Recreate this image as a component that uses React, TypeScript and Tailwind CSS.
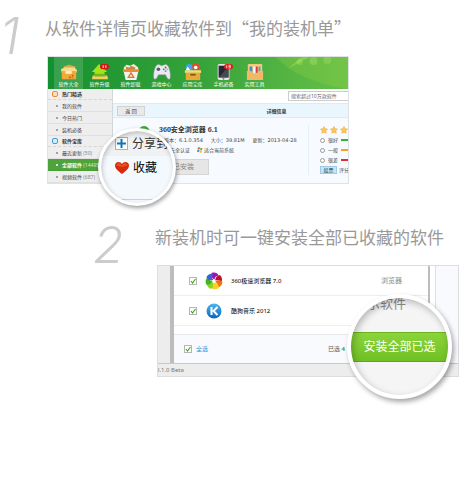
import React from "react";

type IconProps = { className?: string };

const BoxIcon = () => (
  <svg viewBox="0 0 20 20" className="size-[18px]">
    <path d="M4 4 10 2l7 2v5H4z" fill="#d9a94c" />
    <path d="M1 7 5 5h11l3 3-1 3H2z" fill="#f7dc8c" />
    <rect x="2" y="9" width="16" height="9" rx="1" fill="#f2a93b" />
    <path d="M6 9h7v3H6z" fill="#fff1bd" />
    <path d="M13 13h2v2h-2zm0 3h2v1h-2zm-3-1h2v2h-2z" fill="#b56617" />
  </svg>
);

const UpgradeIcon = () => (
  <svg viewBox="0 0 20 20" className="size-[18px]">
    <path d="M9 1 1 10h3v4h11v-4h3z" fill="#a5e319" />
    <path d="M2 14h16l1 4H1z" fill="#f4ce63" />
    <path d="M4 12h12v3H4z" fill="#6fb81b" />
    <rect x="10" y="1" width="10" height="6" rx="3" fill="#d91212" />
    <path d="M13.500 2.500v3M16.500 2.500v3" stroke="#fff" />
  </svg>
);

const RecycleIcon = () => (
  <svg viewBox="0 0 20 20" className="size-[18px]">
    <path d="M2 5 5 2l4 1 4-2 5 4v3H2z" fill="#f6eee0" />
    <path d="m4 4 4 1 2-2 5 2-1 3H5z" fill="#c88752" />
    <path d="M1 7h18v3H1z" fill="#f08b2e" />
    <path d="M2 10h16l-2 9H4z" fill="#f2f2ee" />
    <path d="m10 11 3 5H7z" fill="none" stroke="#e0782a" strokeWidth="1.500" />
  </svg>
);

const GamepadIcon = () => (
  <svg viewBox="0 0 20 20" className="size-[18px]">
    <path d="M5 2c2-1 3 1 5 1s3-2 5-1c3 1 5 10 4 15-1 2-3 1-5-4H6c-2 5-4 6-5 4C0 12 2 3 5 2z" fill="#e9e9f1" stroke="#9a9cab" strokeWidth=".6" />
    <circle cx="6" cy="7" r="2" fill="#555a68" />
    <circle cx="14" cy="5" r="1" fill="#d33" />
    <circle cx="12" cy="7" r="1" fill="#3972c5" />
    <circle cx="16" cy="7" r="1" fill="#e2b31d" />
    <circle cx="14" cy="9" r="1" fill="#47a33a" />
  </svg>
);

const TreasureIcon = () => (
  <svg viewBox="0 0 20 20" className="size-[18px]">
    <circle cx="6" cy="5" r="4" fill="#3fa7e8" />
    <circle cx="13" cy="4" r="4" fill="#e94a2d" />
    <circle cx="13" cy="5" r="2" fill="#fff" />
    <path d="m4 4 3 4H2z" fill="#fff" />
    <path d="M1 8h18v3H1z" fill="#f8d975" />
    <path d="M2 11h16v8H2z" fill="#e8a936" />
    <path d="M7 12h6v2H7z" fill="#8a5415" />
  </svg>
);

const PhoneIcon = () => (
  <svg viewBox="0 0 20 20" className="size-[18px]">
    <rect x="3" y="1" width="13" height="18" rx="2" fill="#e8e8e8" />
    <rect x="4" y="3" width="11" height="13" fill="#262a30" />
    <path d="M4 16 15 4v12z" fill="#444a52" />
    <circle cx="9.500" cy="17.500" r="1" fill="#777" />
    <rect x="10" y="1" width="10" height="6" rx="3" fill="#e01b1b" />
    <path d="M13 2.500v3M15 2.500h2v3h-2m0-1.500h2" stroke="#fff" strokeWidth=".8" fill="none" />
  </svg>
);

const ToolsIcon = () => (
  <svg viewBox="0 0 20 20" className="size-[18px]">
    <rect x="2" y="1" width="16" height="12" rx="1" fill="#f3c981" />
    <path d="M4 4h3v7H4z" fill="#3b8fd4" />
    <path d="M8 4h2v7H8z" fill="#f5f5f5" />
    <path d="M11 4h2v7h-2z" fill="#df3b26" />
    <path d="M14 4h2v7h-2z" fill="#4aa1d8" />
    <path d="M1 9h5l2 3h4l2-3h5v10H1z" fill="#f0b868" />
  </svg>
);

const Star = () => (
  <svg viewBox="0 0 10 10" className="size-2 shrink-0">
    <path d="m5 .5 1.400 2.800 3.100.5-2.200 2.200.5 3.100L5 7.700 2.200 9.100l.5-3.100L.5 3.800l3.100-.5z" fill="#fcc94e" stroke="#e8a13a" strokeWidth=".6" />
  </svg>
);

const Heart = ({ className }: IconProps) => (
  <svg viewBox="0 0 14 12" className={className}>
    <path d="M7 12C3 9 0 6.500 0 3.500 0 1.300 1.600 0 3.500 0 5 0 6.300.8 7 2 7.700.8 9 0 10.500 0 12.400 0 14 1.300 14 3.500 14 6.500 11 9 7 12z" fill="#d42c0c" />
    <path d="M1.500 3.500C1.700 2 2.500 1.300 3.800 1.200 5.300 1.200 6.300 2.200 7 3.600 7.700 2.200 8.700 1.200 10 1.200c1.500 0 2.400 1 2.500 2.300-3 1.500-8 1.500-11 0z" fill="#e8502a" />
  </svg>
);

const WindowsFlag = () => (
  <svg viewBox="0 0 12 12" className="size-[6px] shrink-0">
    <path d="M2 1q2-1 4 0L5 5q-2-1-4 0z" fill="#e8502a" />
    <path d="M7 1.500q2 1 4 0L10 6Q8 7 6 6z" fill="#6ab42d" />
    <path d="M1 6q2-1 4 0l-1 4q-2-1-4 0z" fill="#3b82d0" />
    <path d="M6 7q2 1 4 0l-1 4q-2 1-4 0z" fill="#f4b92a" />
  </svg>
);

const blades = [
  { fill: "#a312b8", angle: 0 },
  { fill: "#c01030", angle: 60 },
  { fill: "#f2700f", angle: 110 },
  { fill: "#fbd021", angle: 160 },
  { fill: "#8fd41f", angle: 215 },
  { fill: "#42b51c", angle: 260 },
  { fill: "#3d62d8", angle: 310 },
];

const Pinwheel = () => (
  <svg viewBox="0 0 18 18" className="size-[18px]">
    {blades.map(({ fill, angle }) => (
      <path key={fill} d="M9 7.500C6.500 6 5.500 3 7 .8c3-.8 6 .4 6.500 3-2-.2-3.500 1-4 3.700z" fill={fill} transform={`rotate(${angle} 9 9)`} />
    ))}
    <circle cx="9" cy="9" r="1.500" fill="#fff" />
  </svg>
);

const KugouIcon = () => (
  <svg viewBox="0 0 18 18" className="size-[18px]">
    <defs>
      <linearGradient id="kg" x2="0" y2="1">
        <stop stopColor="#4fb6ee" />
        <stop offset="1" stopColor="#0a63bd" />
      </linearGradient>
    </defs>
    <circle cx="9" cy="9" r="7.500" fill="url(#kg)" />
    <path d="M6.500 5v8M12.500 5 8.500 9l4 4" fill="none" stroke="#fff" strokeWidth="2" />
  </svg>
);

const tools = [
  { name: "软件大全", Icon: BoxIcon },
  { name: "软件升级", Icon: UpgradeIcon },
  { name: "软件卸载", Icon: RecycleIcon },
  { name: "游戏中心", Icon: GamepadIcon },
  { name: "应用宝库", Icon: TreasureIcon },
  { name: "手机必备", Icon: PhoneIcon },
  { name: "实用工具", Icon: ToolsIcon },
];

function SideTitle({ text, tone }: { text: string; tone: "orange" | "blue" }) {
  return (
    <div className="flex h-[11px] items-center gap-1 border-b border-dashed border-[#d5d5d5] pl-1 font-bold text-[#333]">
      <span className={`size-[6px] rounded-[2px] border ${tone === "orange" ? "border-[#f08a30] bg-[#fde0c2]" : "border-[#3f9cd6] bg-[#d8eefb]"}`} />
      {text}
    </div>
  );
}

function SideItem({ text, count, active }: { text: string; count?: string; active?: boolean }) {
  return (
    <a href="#list" className={`flex h-3 items-center gap-1 overflow-hidden border-b pl-2 whitespace-nowrap ${active ? "border-[#4a9e38] bg-[#4fa33c] font-bold text-white" : "border-[#e0e0e0] text-[#444]"}`}>
      <span className={`size-[2px] shrink-0 rounded-full ${active ? "bg-white" : "bg-[#888]"}`} />
      <span>
        {text} {count && <span className={active ? "font-normal text-[#d5efcd]" : "text-[#888]"}>({count})</span>}
      </span>
    </a>
  );
}

function Rating({ label, bar }: { label: string; bar: string }) {
  return (
    <label className="flex h-[10px] items-center gap-[3px] whitespace-nowrap">
      <input type="radio" name="rating" className="size-[5px] shrink-0 appearance-none rounded-full border border-[#999] bg-white" />
      {label}
      <span className={`h-[2px] w-3 shrink-0 ${bar}`} />
    </label>
  );
}

function StoreWindow() {
  return (
    <div className="overflow-hidden border border-[#dfe3e6] bg-white text-[5px] leading-[8px] text-[#444]">
      <nav className="flex h-8 bg-linear-to-r from-[#12902f] via-[#34a339] to-[#66c04a] pl-[5px]">
        {tools.map(({ name, Icon }, i) => (
          <button key={name} type="button" className="w-[31px] px-px leading-[7px] text-white">
            <span className={`flex h-full flex-col items-center justify-end pb-px ${i === 0 ? "bg-white/15" : ""}`}>
              <Icon />
              <span className="whitespace-nowrap">{name}</span>
            </span>
          </button>
        ))}
        <svg viewBox="0 0 79 32" className="h-full min-w-0 flex-1" preserveAspectRatio="none">
          <path d="M6 0Q28 24 79 32V0z" fill="#8fd03f" opacity=".3" />
          <path d="M18 12 32 0h8z" fill="#c2ea5a" opacity=".35" />
          <circle cx="30" cy="5" r="3" fill="#c4ec80" opacity=".3" />
          <circle cx="44" cy="4" r="4" fill="#c4ec80" opacity=".3" />
          <circle cx="58" cy="3" r="4" fill="#c4ec80" opacity=".25" />
        </svg>
      </nav>
      <div className="flex">
        <aside className="w-[65px] shrink-0 border-r border-[#d2d7da] bg-[#eeeeee]">
          <SideTitle text="热门精选" tone="orange" />
          <SideItem text="我的软件" />
          <SideItem text="今日热门" />
          <SideItem text="装机必备" />
          <SideTitle text="软件宝库" tone="blue" />
          <SideItem text="最近更新" count="50" />
          <SideItem text="全部软件" count="14495" active />
          <SideItem text="视频软件" count="687" />
        </aside>
        <main className="min-w-0 flex-1 bg-[#f7fbff]">
          <div className="flex h-[14px] items-center justify-end bg-white">
            <input aria-label="搜索软件" placeholder="搜索超过10万款软件" className="h-[10px] w-[60px] border border-r-0 border-[#ccc] bg-white pl-[2px] placeholder:text-[#666]" />
          </div>
          <div className="flex h-[15px] items-center border-y border-[#dcecf5] bg-[#eaf6fd] pl-1">
            <button type="button" className="h-[10px] w-7 border border-[#d2d2d2] bg-[#e9e9e9] leading-[8px] text-[#333]">返 回</button>
            <h3 className="flex-1 pl-[60px] text-center font-bold text-[#333]">详细信息</h3>
          </div>
          <div className="flex pt-[7px]">
            <div className="min-w-0 flex-1 border-r border-[#e3f0f8] pl-[25px]">
              <div className="flex items-center gap-[9px]">
                <svg viewBox="0 0 12 10" className="h-[10px] w-3">
                  <path d="M0 8a6 7 0 0 1 12 0z" fill="#38a92c" />
                  <path d="M2 10a3 5 0 0 1 7 0z" fill="#f2fae8" />
                </svg>
                <h2 className="font-['Noto_Serif','DejaVu_Serif','Noto_Sans_CJK_SC',serif] text-[7px] leading-[10px] font-bold text-[#333]">360安全浏览器 6.1</h2>
              </div>
              <div className="flex h-[10px] items-center gap-2 pl-[26px] font-['DejaVu_Sans','Noto_Sans_CJK_SC',sans-serif] whitespace-nowrap">
                <span>版本：6.1.0.354</span>
                <span>大小：39.81M</span>
                <span>更新：2013-04-28</span>
              </div>
              <div className="flex h-[10px] items-center gap-[7px] pl-8 whitespace-nowrap">
                <span>安全认证</span>
                <span className="flex items-center gap-px">
                  <WindowsFlag />
                  适合当前系统
                </span>
              </div>
              <button type="button" disabled className="mt-1 h-4 w-[71px] border border-[#d5d5d5] bg-[#e6e6e6] pl-5 text-[7px] leading-3 text-[#888]">已安装</button>
            </div>
            <div className="w-[39px] shrink-0 overflow-hidden pl-[11px]">
              <div className="flex h-[10px] w-10 items-center gap-[2px]">
                <Star />
                <Star />
                <Star />
              </div>
              <Rating label="很好" bar="bg-[#2db82d]" />
              <Rating label="一般" bar="bg-[#f2a51e]" />
              <Rating label="很差" bar="bg-[#e03030]" />
              <div className="flex items-center gap-[2px] pt-px whitespace-nowrap">
                <button type="button" className="h-2 w-[17px] shrink-0 border border-[#9fcbe6] bg-[#c5e4f6] leading-[6px] text-[#224455]">投票</button>
                评分
              </div>
            </div>
          </div>
        </main>
      </div>
    </div>
  );
}

function CollectLens() {
  return (
    <div className="absolute top-[72px] left-[51px] size-[78px] overflow-hidden rounded-full border-[3px] border-white bg-[#f4f9fd] text-xs shadow-[1px_2px_4px_rgba(0,0,0,0.4)]">
      <div className="flex h-[25px] items-center gap-1 bg-[#f0f1f2] pl-[14px] whitespace-nowrap text-[#333]">
        <span className="flex size-[13px] shrink-0 items-center justify-center border border-[#8bbbd8] bg-white">
          <svg viewBox="0 0 9 9" className="size-[9px]">
            <path d="M4.500 0v9M0 4.500h9" stroke="#087cb5" strokeWidth="2" />
          </svg>
        </span>
        分享到
      </div>
      <button type="button" className="flex h-6 items-center gap-1 pl-[14px] text-black">
        <Heart className="h-3 w-[14px]" />
        收藏
      </button>
      <div className="mt-[19px] h-px bg-[#b5d9ee]" />
      <div className="pointer-events-none absolute inset-0 rounded-full shadow-[inset_1px_2px_5px_rgba(0,0,0,0.22)]" />
    </div>
  );
}

function Tick({ id, label }: { id: string; label: string }) {
  return (
    <span className="grid size-2 shrink-0">
      <input id={id} type="checkbox" defaultChecked aria-label={label} className="col-start-1 row-start-1 size-2 appearance-none border border-[#b5b5b5] bg-white" />
      <svg viewBox="0 0 8 8" className="pointer-events-none col-start-1 row-start-1 size-2">
        <path d="m2 4 1.500 2L6.500 2" fill="none" stroke="#4aa51c" strokeWidth="1.200" />
      </svg>
    </span>
  );
}

function AppRow({ id, name, kind, children }: { id: string; name: string; kind?: string; children: React.ReactNode }) {
  return (
    <div className="flex h-[30px] items-center border-b border-[#eeeeee] pr-[26px] pl-[15px]">
      <Tick id={id} label={name} />
      <span className="mr-2 ml-2">{children}</span>
      <label htmlFor={id} className="text-[6px] text-black">{name}</label>
      <span className="ml-auto text-[#888]">{kind}</span>
    </div>
  );
}

function InstallWindow() {
  return (
    <div className="border border-[#dddddd] bg-[#ededed] text-[7px] leading-[10px]">
      <div className="flex h-[97px]">
        <div className="w-4 shrink-0 border-r-4 border-[#bcbcbc]" />
        <div className="min-w-0 flex-1 bg-white">
          <AppRow id="chrome360" name="360极速浏览器 7.0" kind="浏览器">
            <Pinwheel />
          </AppRow>
          <AppRow id="kugou" name="酷狗音乐 2012">
            <KugouIcon />
          </AppRow>
          <div className="mt-2 flex h-[29px] items-center gap-1 border-t border-[#e6eaee] bg-[#f8fafd] pl-[10px]">
            <Tick id="all" label="全选" />
            <label htmlFor="all" className="text-[6px] text-[#1d96d8]">全选</label>
            <span className="ml-auto w-[100px] text-[6px] text-[#555]">
              已选 <b className="text-[#3f9f2a]">4</b>
            </span>
          </div>
        </div>
        <div className="w-2 shrink-0 border-r border-l-2 border-r-[#dcdfe3] border-l-[#bcbcbc] bg-white" />
        <div className="w-[22px] shrink-0 bg-[#f8fafd]" />
      </div>
      <div className="h-[13px] overflow-hidden border-t border-[#c8c8c8] text-[6px] leading-3 text-[#777]">
        <span className="-ml-[2px]">0.1.0 Beta</span>
      </div>
    </div>
  );
}

function InstallLens() {
  return (
    <div className="absolute top-[29px] left-[190px] size-[105px] overflow-hidden rounded-full border-4 border-white bg-[#f5f5f5] shadow-[2px_3px_5px_rgba(0,0,0,0.35)]">
      <p className="h-[34px] pl-4 text-[13px] leading-[10px] text-[#888]">示软件</p>
      <button type="button" className="block h-[30px] w-full border-y border-t-[#6bb31f] border-b-[#5fa61d] bg-linear-to-b from-[#8bd43a] to-[#6fc024] text-center text-xs text-white">安装全部已选</button>
      <div className="pointer-events-none absolute inset-0 rounded-full shadow-[inset_2px_3px_7px_rgba(0,0,0,0.25)]" />
    </div>
  );
}

export default function App() {
  return (
    <div className="min-h-screen bg-white font-['Noto_Sans','Noto_Sans_CJK_SC',sans-serif]">
      <section className="flex pt-4">
        <span className="w-[47px] shrink-0 font-['Inter','Roboto',sans-serif] text-[50px] leading-10 font-light text-[#cccccc] italic">1</span>
        <div className="min-w-0 flex-1">
          <h1 className="-ml-[2px] pb-4 font-['Noto_Sans_CJK_SC',sans-serif] text-[17px] leading-6 text-[#999999]">从软件详情页收藏软件到“我的装机单”</h1>
          <div className="relative max-w-[302px]">
            <StoreWindow />
            <CollectLens />
          </div>
        </div>
      </section>
      <section className="flex pt-[41px] pl-[93px]">
        <span className="w-16 shrink-0 font-['Inter','Roboto',sans-serif] text-[50px] leading-10 font-light text-[#cccccc] italic">2</span>
        <div className="min-w-0 flex-1">
          <h2 className="-ml-[2px] pb-4 font-['Noto_Sans_CJK_SC',sans-serif] text-[17px] leading-6 text-[#999999]">新装机时可一键安装全部已收藏的软件</h2>
          <div className="relative max-w-[302px]">
            <InstallWindow />
            <InstallLens />
          </div>
        </div>
      </section>
    </div>
  );
}
